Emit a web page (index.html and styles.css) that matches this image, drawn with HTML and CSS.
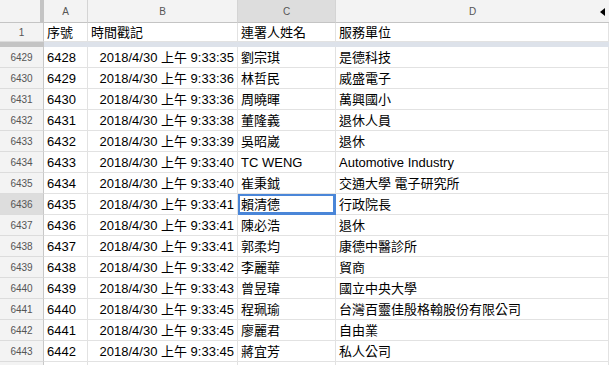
FILE: index.html
```html
<!DOCTYPE html>
<html lang="zh-Hant">
<head>
<meta charset="utf-8">
<title>Sheet</title>
<link rel="stylesheet" href="styles.css">
</head>
<body>
<div class="sheet">
  <div class="row colhead">
    <div class="corner"></div>
    <div class="ch">A</div>
    <div class="ch">B</div>
    <div class="ch sel">C</div>
    <div class="ch last">D<span class="arrow"></span></div>
  </div>
  <div class="row first">
    <div class="rh">1</div>
    <div class="c">序號</div>
    <div class="c">時間戳記</div>
    <div class="c">連署人姓名</div>
    <div class="c">服務單位</div>
  </div>
  <div class="freeze"><div class="fz-l"></div><div class="fz-r"></div></div>
  <div class="row"><div class="rh">6429</div><div class="c">6428</div><div class="c r">2018/4/30 上午 9:33:35</div><div class="c">劉宗琪</div><div class="c">是德科技</div></div>
  <div class="row"><div class="rh">6430</div><div class="c">6429</div><div class="c r">2018/4/30 上午 9:33:36</div><div class="c">林哲民</div><div class="c">威盛電子</div></div>
  <div class="row"><div class="rh">6431</div><div class="c">6430</div><div class="c r">2018/4/30 上午 9:33:36</div><div class="c">周曉暉</div><div class="c">萬興國小</div></div>
  <div class="row"><div class="rh">6432</div><div class="c">6431</div><div class="c r">2018/4/30 上午 9:33:38</div><div class="c">董隆義</div><div class="c">退休人員</div></div>
  <div class="row"><div class="rh">6433</div><div class="c">6432</div><div class="c r">2018/4/30 上午 9:33:39</div><div class="c">吳昭崴</div><div class="c">退休</div></div>
  <div class="row"><div class="rh">6434</div><div class="c">6433</div><div class="c r">2018/4/30 上午 9:33:40</div><div class="c">TC WENG</div><div class="c">Automotive Industry</div></div>
  <div class="row"><div class="rh">6435</div><div class="c">6434</div><div class="c r">2018/4/30 上午 9:33:40</div><div class="c">崔秉鉞</div><div class="c">交通大學 電子研究所</div></div>
  <div class="row"><div class="rh sel">6436</div><div class="c">6435</div><div class="c r">2018/4/30 上午 9:33:41</div><div class="c active">賴清德</div><div class="c">行政院長</div></div>
  <div class="row"><div class="rh">6437</div><div class="c">6436</div><div class="c r">2018/4/30 上午 9:33:41</div><div class="c">陳必浩</div><div class="c">退休</div></div>
  <div class="row"><div class="rh">6438</div><div class="c">6437</div><div class="c r">2018/4/30 上午 9:33:41</div><div class="c">郭柔均</div><div class="c">康德中醫診所</div></div>
  <div class="row"><div class="rh">6439</div><div class="c">6438</div><div class="c r">2018/4/30 上午 9:33:42</div><div class="c">李麗華</div><div class="c">貿商</div></div>
  <div class="row"><div class="rh">6440</div><div class="c">6439</div><div class="c r">2018/4/30 上午 9:33:43</div><div class="c">曾昱瑋</div><div class="c">國立中央大學</div></div>
  <div class="row"><div class="rh">6441</div><div class="c">6440</div><div class="c r">2018/4/30 上午 9:33:45</div><div class="c">程珮瑜</div><div class="c">台灣百靈佳殷格翰股份有限公司</div></div>
  <div class="row"><div class="rh">6442</div><div class="c">6441</div><div class="c r">2018/4/30 上午 9:33:45</div><div class="c">廖麗君</div><div class="c">自由業</div></div>
  <div class="row"><div class="rh">6443</div><div class="c">6442</div><div class="c r">2018/4/30 上午 9:33:45</div><div class="c">蔣宜芳</div><div class="c">私人公司</div></div>
  <div class="row"><div class="rh"></div><div class="c"></div><div class="c"></div><div class="c"></div><div class="c"></div></div>
</div>
</body>
</html>
```
FILE: styles.css
```css
* { box-sizing: border-box; }
html, body { margin: 0; padding: 0; background: #fff; overflow: hidden; }
body { width: 609px; height: 365px; }

.sheet {
  font-family: "Liberation Sans", "Noto Sans CJK TC", Arial, sans-serif;
  font-size: 13px;
  color: #000;
  position: relative;
}

.row {
  display: grid;
  grid-template-columns: 44px 44px 150px 98px 1fr;
  height: 21px;
}

.colhead { height: 23px; background: #f3f3f3; }
.corner {
  background: #f3f3f3;
  border-right: 4px solid #c4c4c4;
  border-bottom: 1px solid #c4c4c4;
}
.ch {
  display: flex;
  align-items: center;
  justify-content: center;
  font-size: 10px;
  color: #555;
  border-right: 1px solid #d4d4d4;
  border-bottom: 1px solid #c4c4c4;
  position: relative;
}
.ch.sel { background: #dddddd; }
.ch.last { border-right: none; }
.arrow {
  position: absolute;
  right: 4px;
  top: 8px;
  width: 0; height: 0;
  border-top: 4px solid transparent;
  border-bottom: 4px solid transparent;
  border-right: 5px solid #000;
}

.first { height: 19px; }

.freeze { display: grid; grid-template-columns: 44px 1fr; height: 5px; }
.fz-l { background: #c4c4c4; }
.fz-r { background: #dde2ea; }

.rh {
  background: #f3f3f3;
  border-right: 1px solid #c8c8c8;
  border-bottom: 1px solid #dcdcdc;
  font-size: 10px;
  color: #555;
  display: flex;
  align-items: center;
  justify-content: center;
}
.rh.sel { background: #dddddd; }

.c {
  border-right: 1px solid #e2e2e2;
  border-bottom: 1px solid #e2e2e2;
  padding: 0 3px;
  display: flex;
  align-items: center;
  white-space: nowrap;
  overflow: hidden;
  line-height: 1;
}
.c.r { justify-content: flex-end; }
.c.active { box-shadow: inset 0 0 0 2px #4a86d8; border-color: #4a86d8; }
```
